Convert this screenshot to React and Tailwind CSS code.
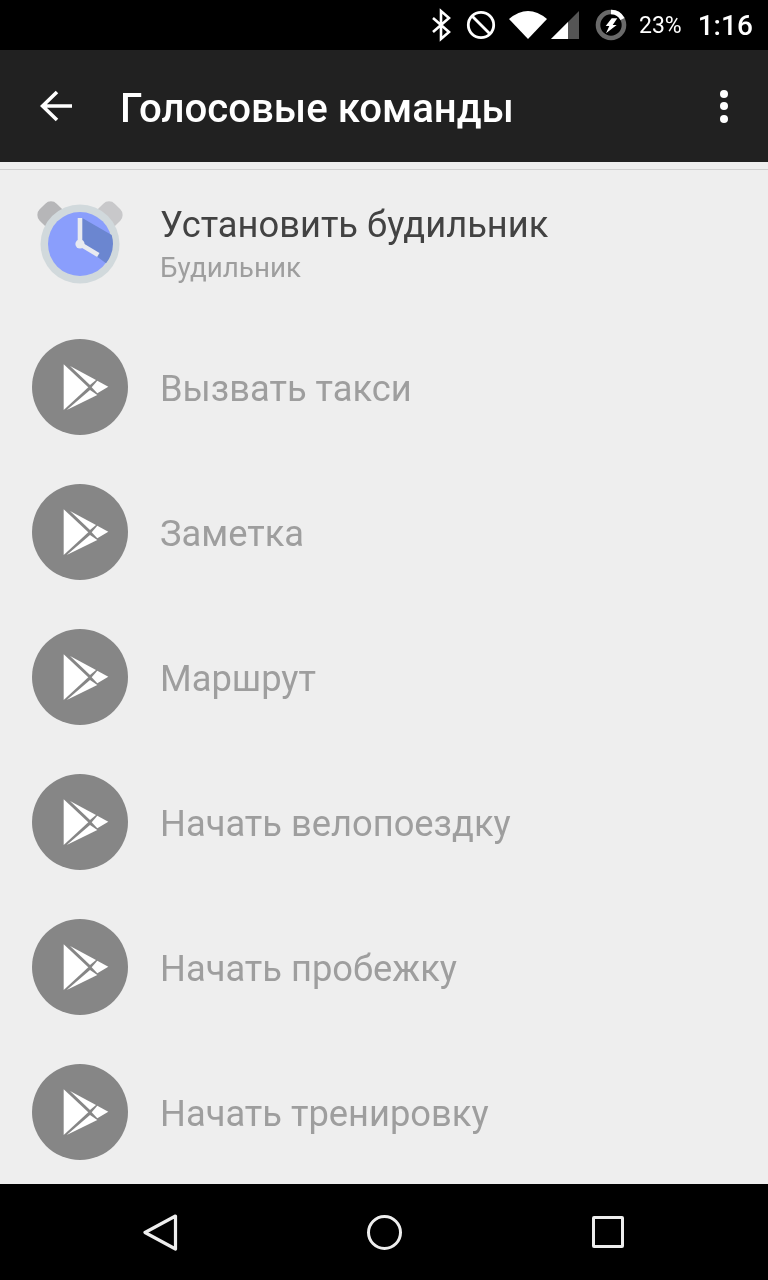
import React from "react";

const items = ["Вызвать такси", "Заметка", "Маршрут", "Начать велопоездку", "Начать пробежку", "Начать тренировку"];

function StatusIcons() {
  return (
    <svg width="152" height="50" viewBox="430 0 152 50" className="shrink-0">
      <path d="M433 18 L449 32 L441 39 L441 11 L449 18 L433 32" fill="none" stroke="#fff" strokeWidth="2.6" strokeLinejoin="miter" />
      <circle cx="481" cy="25" r="12.7" fill="none" stroke="#fff" strokeWidth="2.8" />
      <path d="M472 16 L490 34" stroke="#fff" strokeWidth="2.8" />
      <path d="M509 19 Q528 3 547 19 L528 39 Z" fill="#fff" />
      <path d="M551 39 L579 11 L579 39 Z" fill="#555" />
      <path d="M551 39 L568 22 L568 39 Z" fill="#fff" />
    </svg>
  );
}

function Battery() {
  return (
    <svg width="32" height="32" viewBox="0 0 32 32" className="shrink-0">
      <circle cx="16" cy="16" r="13" fill="none" stroke="#6a6a6a" strokeWidth="4.6" />
      <path d="M16 3 A13 13 0 0 1 27.5 10" fill="none" stroke="#fff" strokeWidth="4.6" />
      <path d="M16.7 9.3 L22.3 9.3 L17.7 16 L21.7 16 L11 24.3 L14.3 17 L10.7 17 Z" fill="#fff" />
    </svg>
  );
}

function PlayIcon() {
  return (
    <div className="w-24 h-24 rounded-full bg-[#868686] shrink-0">
      <svg width="96" height="96" viewBox="0 0 96 96">
        <path d="M31.7 25.3 L31.7 71 L56.3 48.3 Z" fill="#fff" />
        <path d="M38 27 L64 41 L58 46 Z" fill="#fff" />
        <path d="M65.3 41.7 L76.3 47.7 L65.3 54.3 L59.7 48.3 Z" fill="#fff" />
        <path d="M34.7 71 L58 51 L65.3 56 Z" fill="#fff" />
      </svg>
    </div>
  );
}

function ClockIcon() {
  return (
    <svg width="96" height="96" viewBox="0 0 96 96" className="shrink-0 overflow-visible">
      <rect x="7" y="9" width="24" height="24" rx="8" fill="#b6b6b8" transform="rotate(45 19 21)" />
      <rect x="65" y="9" width="24" height="24" rx="8" fill="#c8c8ca" transform="rotate(45 77 21)" />
      <circle cx="48" cy="50" r="39.5" fill="#d1d9dc" />
      <circle cx="48" cy="50" r="32" fill="#8a9efc" />
      <path d="M48 24.3 L50.7 24.3 L79.7 41 A32 32 0 0 1 74 69.3 L48 50 Z" fill="#6b86d0" />
      <rect x="45.7" y="24" width="4.6" height="26" fill="#e8eaf0" />
      <path d="M48 50 L66.3 61" stroke="#e8eaf0" strokeWidth="4.6" />
      <circle cx="48" cy="50" r="4.6" fill="#e8eaf0" />
    </svg>
  );
}

export default function App() {
  return (
    <div className="w-[768px] h-[1280px] bg-[#eeeeee] flex flex-col overflow-hidden will-change-transform" style={{ fontFamily: "Roboto, sans-serif" }}>
      <div className="h-[50px] bg-black flex items-center shrink-0 pl-[430px] text-white">
        <StatusIcons />
        <div className="ml-[13px] flex items-center"><Battery /></div>
        <span className="ml-[12px] pt-[1px] text-[23px] leading-none font-normal">23%</span>
        <span className="ml-[16px] pt-[1px] text-[28px] leading-none font-medium">1:16</span>
      </div>

      <div className="h-[112px] bg-[#212121] flex items-center shrink-0 text-white">
        <svg width="34" height="32" viewBox="0 0 34 32" className="ml-[40px] shrink-0">
          <path d="M32 16 H2.5 M17 2 L2.5 16 L17 30" fill="none" stroke="#fff" strokeWidth="3.6" />
        </svg>
        <span className="ml-[46px] pt-[6px] text-[40.2px] leading-none font-medium flex-1">Голосовые команды</span>
        <div className="mr-[40px] flex flex-col gap-[4.5px]">
          <span className="w-[8px] h-[8px] rounded-full bg-white" />
          <span className="w-[8px] h-[8px] rounded-full bg-white" />
          <span className="w-[8px] h-[8px] rounded-full bg-white" />
        </div>
      </div>

      <div className="h-[8px] shrink-0 border-b border-[#d0d0d0]" />

      <div className="flex-1 overflow-hidden">
        <div className="h-[144px] flex items-center pl-[32px]">
          <ClockIcon />
          <div className="ml-[33px] pt-[3px] flex flex-col">
            <span className="text-[36.3px] leading-[42px] text-[#424242] -ml-[1px]">Установить будильник</span>
            <span className="text-[27.8px] leading-[32px] mt-[6px] text-[#9e9e9e] -ml-[1px]">Будильник</span>
          </div>
        </div>
        {items.map((t) => (
          <div key={t} className="h-[145px] flex items-center pl-[32px]">
            <PlayIcon />
            <span className="ml-[32px] pt-[6px] text-[36.3px] leading-none text-[#9e9e9e]">{t}</span>
          </div>
        ))}
      </div>

      <div className="h-[96px] bg-black shrink-0 flex items-center relative">
        <svg width="36" height="38" viewBox="0 0 36 38" className="ml-[142px] shrink-0">
          <path d="M33.5 3 L3 19.5 L33.5 36 Z" fill="none" stroke="#eee" strokeWidth="3.2" strokeLinejoin="round" />
        </svg>
        <span className="ml-[189px] w-[35px] h-[35px] rounded-full border-[3px] border-[#eeeeee] shrink-0" />
        <span className="ml-[190px] w-[32px] h-[32px] rounded-[2px] border-[3px] border-[#eeeeee] shrink-0" />
      </div>
    </div>
  );
}
